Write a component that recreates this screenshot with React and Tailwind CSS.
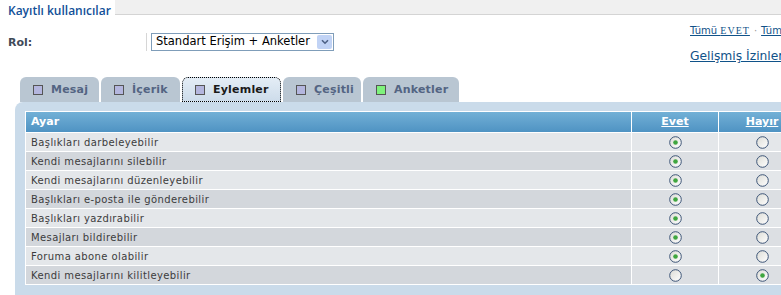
import React from 'react';

const rows = [
  { label: 'Başlıkları darbeleyebilir', yes: true },
  { label: 'Kendi mesajlarını silebilir', yes: true },
  { label: 'Kendi mesajlarını düzenleyebilir', yes: true },
  { label: 'Başlıkları e-posta ile gönderebilir', yes: true },
  { label: 'Başlıkları yazdırabilir', yes: true },
  { label: 'Mesajları bildirebilir', yes: true },
  { label: 'Foruma abone olabilir', yes: true },
  { label: 'Kendi mesajlarını kilitleyebilir', yes: false },
];

const tabs = [
  { label: 'Mesaj', w: 'w-[79px]' },
  { label: 'İçerik', w: 'w-[79px]' },
  { label: 'Eylemler', w: 'w-[99px]', active: true },
  { label: 'Çeşitli', w: 'w-[78px]' },
  { label: 'Anketler', w: 'w-[96px]', green: true },
];

// radio circle drawn as svg so it looks like the old XP radios
const Radio = ({ on }) => (
  <svg width="13" height="13" viewBox="0 0 13 13">
    <defs>
      <linearGradient id="rg" x1="0" y1="0" x2="1" y2="1">
        <stop offset="0" stopColor="#dcdcd6" />
        <stop offset="1" stopColor="#ffffff" />
      </linearGradient>
    </defs>
    <circle cx="6.5" cy="6.5" r="5.8" fill="url(#rg)" stroke="#3d5577" strokeWidth="1" />
    {on && <circle cx="6.5" cy="6.5" r="2.3" fill="#3fa63f" />}
  </svg>
);

export default function App() {
  return (
    <div className="w-[781px] h-[295px] overflow-hidden bg-white font-['DejaVu_Sans',sans-serif]">
      {/* legend line */}
      <div className="flex h-[15px]">
        <div className="pl-2 pr-1 bg-white text-[12px] leading-[22px] font-semibold text-[#115098] font-['Open_Sans',sans-serif] whitespace-nowrap">
          Kayıtlı kullanıcılar
        </div>
        <div className="flex-1 bg-[#f0f0f0] border-b border-[#d4d4d4]" />
      </div>

      {/* role row */}
      <div className="flex items-start">
        <div className="pl-2 pt-[20px] w-[146px] text-[11px] font-bold text-[#3f4a58]">Rol:</div>
        <div className="mt-[18px] flex items-center">
          <div className="w-px h-[18px] bg-[#d6d6d6] mr-[4px]" />
          <div className="w-[183px] h-[18px] border border-[#7f9db9] flex items-center justify-between pl-[4px] pr-[1px]">
            <span className="text-[11.5px] text-black leading-none">Standart Erişim + Anketler</span>
            <span className="w-[15px] h-[14px] bg-[#c1d3f5] rounded-[2px] flex items-center justify-center">
              <svg width="8" height="6" viewBox="0 0 8 6">
                <path d="M1 1.2 L4 4.2 L7 1.2" fill="none" stroke="#4d6185" strokeWidth="1.6" />
              </svg>
            </span>
          </div>
        </div>
        <div className="ml-auto w-[91px] pt-[9px] flex flex-col text-[#105289] whitespace-nowrap">
          <div className="text-[10px] leading-[14px]">
            <span className="underline">Tümü <span className="text-[10px] font-['Liberation_Serif',serif] tracking-[1px]">EVET</span></span>
            <span className="text-[#999] mx-[4px]">·</span>
            <span className="underline">Tümü</span>
          </div>
          <div className="text-[12.3px] underline mt-[9px]">Gelişmiş İzinler</div>
        </div>
      </div>

      {/* tabs */}
      <div className="mt-[12px] flex gap-[2px] pl-[20px] h-[25px]">
        {tabs.map((t) => (
          <div
            key={t.label}
            className={
              t.active
                ? `${t.w} rounded-t-[6px] border border-dotted border-black bg-gradient-to-b from-[#e4edf6] to-[#cddcea] flex items-center gap-[8px] pl-[12px] text-[11px] font-bold tracking-[0.2px] text-[#1a1a1a]`
                : `${t.w} rounded-t-[6px] bg-[#b9c6d2] flex items-center gap-[8px] pl-[13px] text-[11px] font-bold tracking-[0.2px] text-[#536482]`
            }
          >
            <span
              className={
                t.green
                  ? 'w-[10px] h-[10px] border border-[#555] bg-[#7ef27c]'
                  : 'w-[10px] h-[10px] border border-[#555] bg-[#b4b6de]'
              }
            />
            {t.label}
          </div>
        ))}
      </div>

      {/* panel */}
      <div className="ml-[15px] rounded-tl-[8px] bg-[#cadbea] pt-[9px] pl-[10px] h-[200px]">
        <div className="w-[785px] bg-white p-px flex flex-col gap-px">
          <div className="grid grid-cols-[605px_86px_86px] gap-px h-[20px] text-[11px] font-bold text-white">
            <div className="bg-gradient-to-b from-[#72b0d6] to-[#4f93c3] pl-[5px] flex items-center">Ayar</div>
            <div className="bg-gradient-to-b from-[#72b0d6] to-[#4f93c3] flex items-center justify-center underline">Evet</div>
            <div className="bg-gradient-to-b from-[#72b0d6] to-[#4f93c3] flex items-center justify-center underline">Hayır</div>
          </div>
          {rows.map((r, i) => (
            <div key={r.label} className="grid grid-cols-[605px_86px_86px] gap-px h-[18px]">
              <div
                className={
                  i % 2 === 0
                    ? 'bg-[#e4e7ea] pl-[5px] flex items-center text-[10px] tracking-[0.4px] text-[#3c3c3c]'
                    : 'bg-[#d3d7dc] pl-[5px] flex items-center text-[10px] tracking-[0.4px] text-[#3c3c3c]'
                }
              >
                {r.label}
              </div>
              <div className={i % 2 === 0 ? 'bg-[#e4e7ea] flex items-center justify-center' : 'bg-[#dcdfe3] flex items-center justify-center'}>
                <Radio on={r.yes} />
              </div>
              <div className={i % 2 === 0 ? 'bg-[#e4e7ea] flex items-center justify-center' : 'bg-[#dcdfe3] flex items-center justify-center'}>
                <Radio on={!r.yes} />
              </div>
            </div>
          ))}
        </div>
      </div>
    </div>
  );
}
